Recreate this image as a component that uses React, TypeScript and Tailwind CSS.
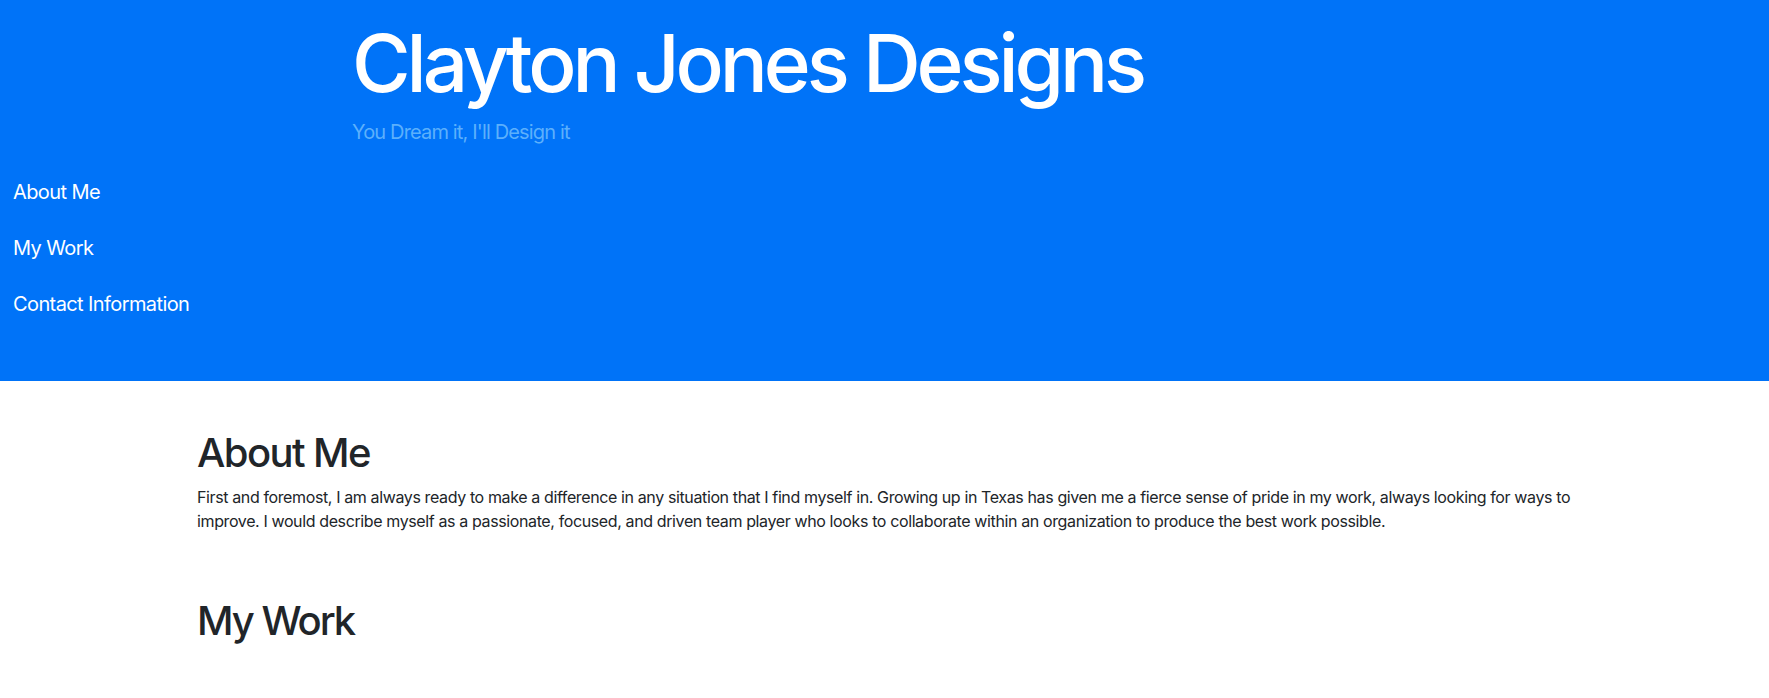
import React from "react";

export default function App() {
  return (
    <div className="min-h-[698px] bg-white" style={{ fontFamily: "Inter, 'Noto Sans', sans-serif" }}>
      <header className="bg-[#0073f8] pb-[62px] pt-[15px]">
        <div className="pl-[352px]">
          <h1 className="text-[80px] font-medium leading-[96px] tracking-[-4.1px] text-white">Clayton Jones Designs</h1>
          <p className="mt-[6px] text-[20px] leading-[30px] font-normal tracking-[-0.85px] text-[#5cb0fc]">You Dream it, I'll Design it</p>
        </div>
        <nav className="mt-[30px] flex flex-col gap-[26px] pl-[13px]">
          <a className="text-[20px] leading-[30px] tracking-[-0.6px] text-white">About Me</a>
          <a className="text-[20px] leading-[30px] tracking-[-0.6px] text-white">My Work</a>
          <a className="text-[20px] leading-[30px] tracking-[-0.6px] text-white">Contact Information</a>
        </nav>
      </header>
      <main className="pl-[197px] pt-[48px]">
        <section className="w-[1400px]">
          <h2 className="text-[40px] font-medium leading-[48px] tracking-[-1.6px] text-[#212529]">About Me</h2>
          <p className="mt-[8px] text-[16px] leading-[24px] tracking-[-0.38px] text-[#212529]">
            First and foremost, I am always ready to make a difference in any situation that I find myself in. Growing up in Texas has given me a fierce sense of pride in my work, always looking for ways to improve. I would describe myself as a passionate, focused, and driven team player who looks to collaborate within an organization to produce the best work possible.
          </p>
        </section>
        <section className="mt-[64px]">
          <h2 className="text-[40px] font-medium leading-[48px] tracking-[-2px] text-[#212529]">My Work</h2>
        </section>
      </main>
    </div>
  );
}
